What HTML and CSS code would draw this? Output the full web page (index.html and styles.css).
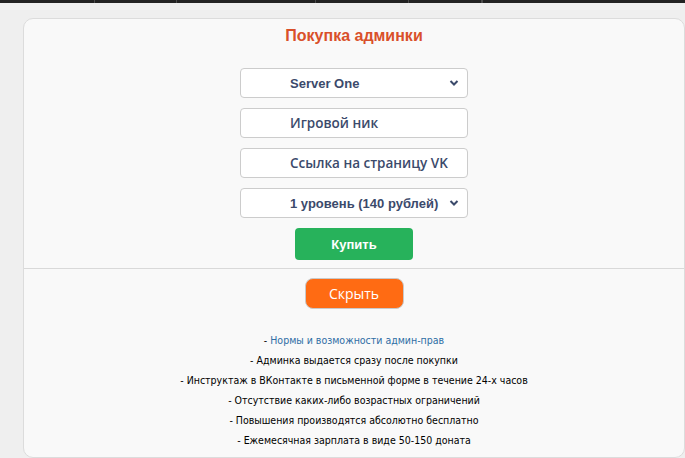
FILE: index.html
```html
<!DOCTYPE html>
<html lang="ru">
<head>
<meta charset="utf-8">
<link rel="stylesheet" href="styles.css">
</head>
<body>
<div class="topbar">
  <span class="seg s1"></span><span class="seg s2"></span><span class="seg s3"></span><span class="seg s4"></span><span class="seg s5"></span><span class="seg s6"></span>
</div>
<div class="card">
  <div class="top">
    <h1 class="title">Покупка админки</h1>
    <div class="form">
      <div class="field select">
        <span>Server One</span>
        <svg class="chev" width="10" height="8" viewBox="0 0 10 8"><path d="M1.5 2 L5 5.5 L8.5 2" fill="none" stroke="#3b4a6b" stroke-width="2"/></svg>
      </div>
      <div class="field input">Игровой ник</div>
      <div class="field input">Ссылка на страницу VK</div>
      <div class="field select">
        <span>1 уровень (140 рублей)</span>
        <svg class="chev" width="10" height="8" viewBox="0 0 10 8"><path d="M1.5 2 L5 5.5 L8.5 2" fill="none" stroke="#3b4a6b" stroke-width="2"/></svg>
      </div>
      <button class="buy">Купить</button>
    </div>
  </div>
  <div class="bottom">
    <button class="hide">Скрыть</button>
    <ul class="list">
      <li>- <a class="link">Нормы и возможности админ-прав</a></li>
      <li>- Админка выдается сразу после покупки</li>
      <li>- Инструктаж в ВКонтакте в письменной форме в течение 24-х часов</li>
      <li>- Отсутствие каких-либо возрастных ограничений</li>
      <li>- Повышения производятся абсолютно бесплатно</li>
      <li>- Ежемесячная зарплата в виде 50-150 доната</li>
    </ul>
  </div>
</div>
</body>
</html>
```
FILE: styles.css
```css
html, body {
  margin: 0;
  padding: 0;
  background: #efefef;
  height: 458px;
  overflow: hidden;
}
.topbar {
  height: 3px;
  background: #222222;
  display: flex;
}
.seg {
  height: 3px;
  border-right: 1px solid #4a4a4a;
}
.s1 { width: 94px; }
.s2 { width: 81px; }
.s3 { width: 138px; }
.s4 { width: 92px; }
.s5 { width: 72px; }
.s6 { width: 0; }
.card {
  margin: 15px 0 0 23px;
  width: 662px;
  height: 440px;
  background: #f9f9f9;
  border: 1px solid #dcdcdc;
  border-radius: 10px;
  box-sizing: border-box;
}
.top {
  padding-top: 7px;
  padding-bottom: 8px;
  border-bottom: 1px solid #d9d9d9;
}
.title {
  margin: 0;
  text-align: center;
  font: bold 16px/20px "Liberation Sans", Arial, sans-serif;
  color: #d9502a;
}
.form {
  margin-top: 22px;
  display: flex;
  flex-direction: column;
  align-items: center;
  gap: 10px;
}
.field {
  width: 228px;
  height: 30px;
  box-sizing: border-box;
  border: 1px solid #cccccc;
  border-radius: 4px;
  background: #ffffff;
  display: flex;
  align-items: center;
  padding-left: 49px;
  padding-right: 8px;
  color: #3b4a6b;
}
.select {
  font: bold 13px "Liberation Sans", Arial, sans-serif;
  justify-content: space-between;
}
.input {
  font: 600 13.5px "Open Sans", sans-serif;
}
.chev {
  display: block;
}
.buy {
  width: 118px;
  height: 32px;
  border: none;
  border-radius: 4px;
  background: #27b25b;
  color: #ffffff;
  font: bold 13px "Liberation Sans", Arial, sans-serif;
  padding: 0;
}
.bottom {
  display: flex;
  flex-direction: column;
  align-items: center;
  padding-top: 9px;
}
.hide {
  width: 99px;
  height: 31px;
  border: 1px solid #c9c9c9;
  border-radius: 8px;
  background: #ff6b13;
  color: #ffffff;
  font: 14px "Open Sans", sans-serif;
  padding: 0;
}
.list {
  list-style: none;
  margin: 21px 0 0 0;
  padding: 0;
  text-align: center;
  font: 10.5px/20px "DejaVu Sans Condensed", "DejaVu Sans", sans-serif;
  color: #000000;
}
.link {
  color: #2f6ea5;
}
```
